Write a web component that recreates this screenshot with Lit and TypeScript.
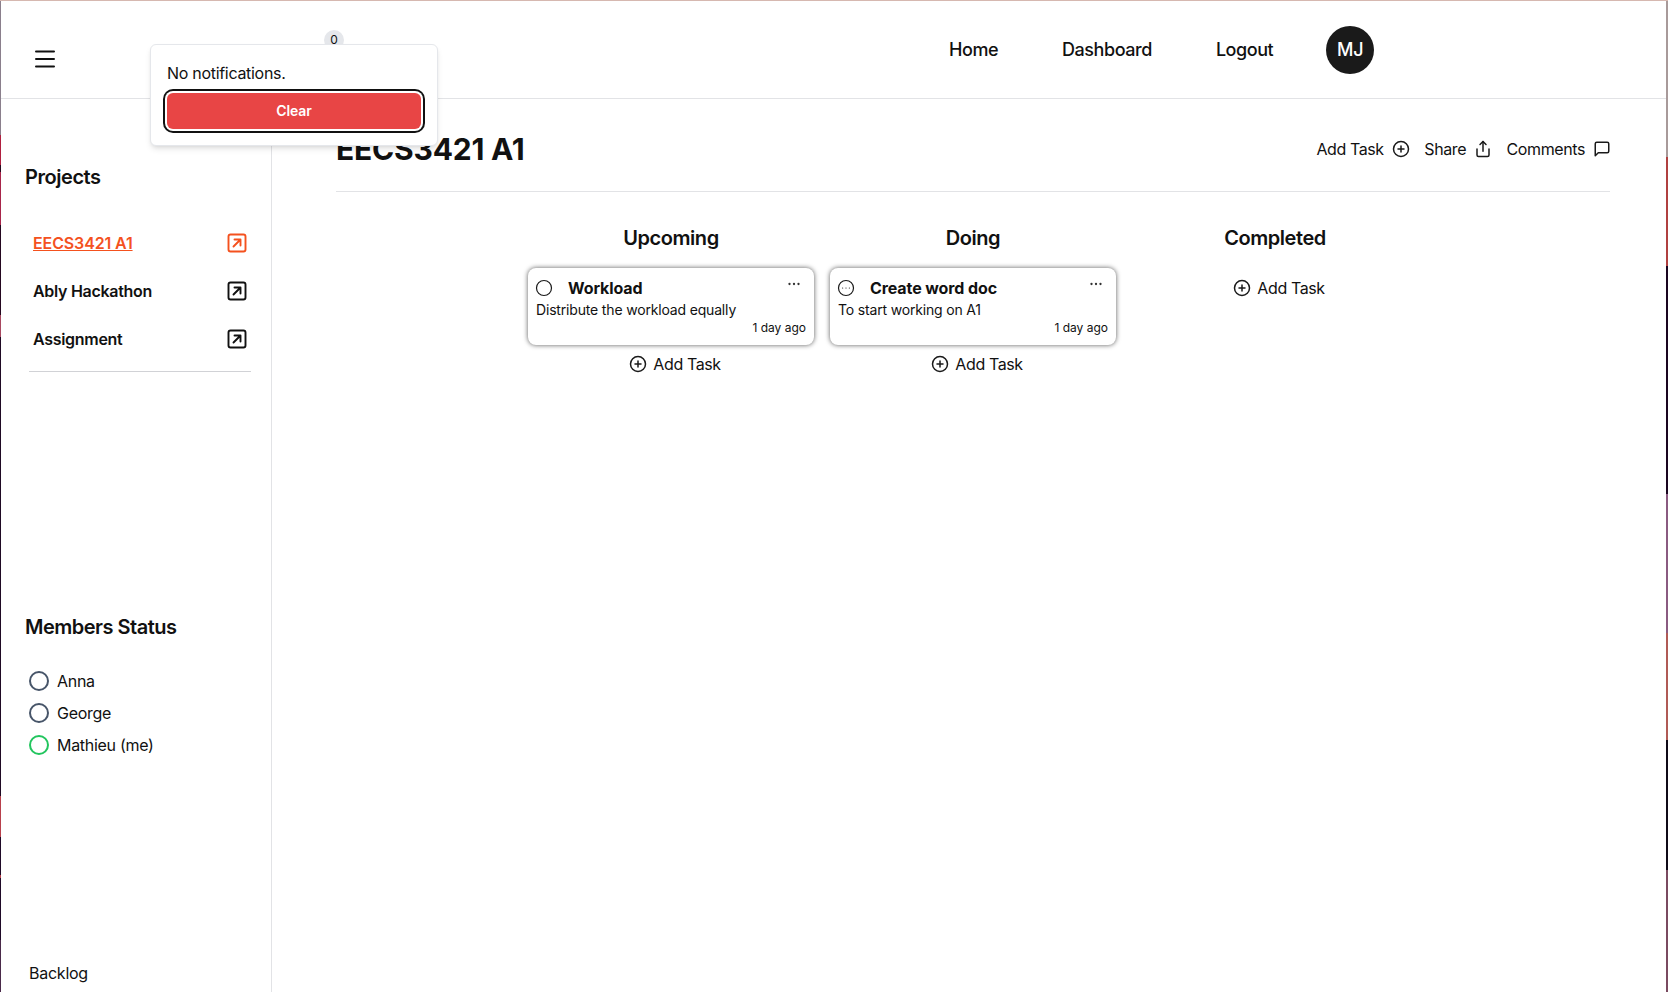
import { LitElement, html, css, svg } from "lit";
import { customElement } from "lit/decorators.js";

const plusCircle = html`<svg class="ic" viewBox="0 0 24 24"><circle cx="12" cy="12" r="10"></circle><path d="M12 8v8M8 12h8"></path></svg>`;
const share = html`<svg class="ic" viewBox="0 0 24 24"><path d="M4 12v8a2 2 0 0 0 2 2h12a2 2 0 0 0 2-2v-8"></path><path d="M16 6l-4-4-4 4"></path><path d="M12 2v13"></path></svg>`;
const comment = html`<svg class="ic" viewBox="0 0 24 24"><path d="M21 15a2 2 0 0 1-2 2H7l-4 4V5a2 2 0 0 1 2-2h14a2 2 0 0 1 2 2z"></path></svg>`;
const external = html`<svg class="ext" viewBox="0 0 24 24"><rect x="3.5" y="3.5" width="17" height="17" rx="2"></rect><path d="M8.5 15.5l7-7M9.5 8.5h6v6"></path></svg>`;
const dots = html`<svg class="dots" viewBox="0 0 16 16"><circle cx="3.5" cy="8" r="1.15"></circle><circle cx="8" cy="8" r="1.15"></circle><circle cx="12.5" cy="8" r="1.15"></circle></svg>`;
const todo = html`<svg class="ic" viewBox="0 0 24 24"><circle cx="12" cy="12" r="10"></circle></svg>`;
const doing = html`<svg class="ic" viewBox="0 0 24 24"><circle cx="12" cy="12" r="10"></circle>${svg`<path d="M7.5 12h.01M12 12h.01M16.5 12h.01"></path>`}</svg>`;

const addTask = (cls: string) => html`<div class="add ${cls}">${plusCircle}<span>Add Task</span></div>`;

const card = (icon: unknown, title: string, desc: string) => html`
  <div class="card">
    <div class="card-head">${icon}<span class="card-title">${title}</span>${dots}</div>
    <div class="card-desc">${desc}</div>
    <div class="card-time">1 day ago</div>
  </div>`;

@customElement("app-root")
export class AppRoot extends LitElement {
  static styles = css`
    :host {
      display: block;
      box-sizing: border-box;
      height: 992px;
      padding: 1px 2px 0 1px;
      overflow: hidden;
      color: #111;
      font-family: Inter, "Liberation Sans", sans-serif;
      letter-spacing: -0.25px;
      background:
        linear-gradient(#d6b8b0, #d6b8b0) top / 100% 1px no-repeat,
        linear-gradient(#8a7f8c 0 135px, #b01f3f 135px 165px, #2a0a20 165px 172px, #a8254a 172px 225px, #240820 225px 315px, #a84860 315px 337px, #1f0a24 337px 796px, #b8404c 796px 837px, #1f0a28 837px 875px, #b8404c 875px 878px, #1f0a28 878px 940px, #4a2a4a 940px) left / 1px 100% no-repeat,
        linear-gradient(#a89a9a 0 157px, #b04040 157px 266px, #1a0520 266px 494px, #8a5a80 494px 633px, #b05a55 633px 740px, #100a18 740px 870px, #7a4a60 870px) right / 2px 100% no-repeat,
        #fff;
    }
    .frame { background: #fff; height: 100%; display: flex; flex-direction: column; }

    .ic { width: 18px; height: 18px; flex: none; fill: none; stroke: #1a1a1a; stroke-width: 2; stroke-linecap: round; stroke-linejoin: round; }
    .ext { width: 24px; height: 24px; flex: none; fill: none; stroke: currentColor; stroke-width: 1.9; stroke-linecap: round; stroke-linejoin: round; }
    .dots { width: 16px; height: 16px; flex: none; fill: #333; margin-left: auto; margin-right: 4px; }

    header { position: relative; height: 97px; flex: none; border-bottom: 1px solid #e2e3e6; display: flex; align-items: flex-start; }
    .menu { width: 24px; height: 24px; margin: 46px 0 0 32px; fill: none; stroke: #111; stroke-width: 2; stroke-linecap: round; }
    nav { display: flex; align-items: center; gap: 64px; margin: 25px 0 0 892px; font-size: 18px; font-weight: 500; line-height: 48px; letter-spacing: -0.45px; }
    .avatar { width: 48px; height: 48px; border-radius: 50%; background: #1a1a1a; color: #fff; font-size: 18px; font-weight: 500; display: flex; align-items: center; justify-content: center; margin-left: -11px; letter-spacing: -0.2px; }

    .badge { position: absolute; left: 323px; top: 29px; width: 20px; height: 20px; border-radius: 50%; background: #e5e7eb; font-size: 12px; line-height: 20px; text-align: center; }
    .pop { position: absolute; left: 149px; top: 43px; z-index: 5; box-sizing: border-box; width: 288px; height: 102px; padding: 16px 14px 0 16px; background: #fff; border: 1px solid #e5e7eb; border-radius: 6px; box-shadow: 0 4px 6px -1px rgba(0,0,0,.1), 0 2px 4px -2px rgba(0,0,0,.1); font-size: 16px; line-height: 24px; letter-spacing: -0.3px; }
    .clear { display: block; box-sizing: border-box; width: 254px; height: 36px; margin: 8px 0 0 0; padding: 0; border: 0; border-radius: 6px; background: #e84545; color: #fff; font: 600 14px/36px Inter, "Liberation Sans", sans-serif; letter-spacing: -0.1px; box-shadow: 0 0 0 2px #fff, 0 0 0 4px #111; }

    .body { flex: 1; min-height: 0; display: flex; }
    aside { box-sizing: border-box; width: 271px; flex: none; border-right: 1px solid #e2e3e6; display: flex; flex-direction: column; padding: 64px 0 7px 24px; }
    h2 { margin: 0; font-size: 20px; line-height: 28px; font-weight: 600; letter-spacing: -0.45px; }
    .projects { margin-top: 28px; width: 224px; }
    .project { display: flex; align-items: center; justify-content: space-between; height: 48px; padding-left: 8px; font-weight: 600; font-size: 16px; letter-spacing: -0.3px; }
    .project.active { color: #f4511e; letter-spacing: -0.12px; }
    .project.active span { text-decoration: underline; }
    .rule { width: 222px; height: 1px; background: #d1d2d6; margin: 8px 0 0 4px; }
    .members-title { margin-top: 241px; letter-spacing: -0.5px; }
    .members { margin-top: 24px; }
    .member { display: flex; align-items: center; gap: 8px; height: 32px; padding-left: 4px; font-size: 16px; letter-spacing: -0.3px; }
    .ring { box-sizing: border-box; width: 20px; height: 20px; border-radius: 50%; border: 2px solid #475569; }
    .ring.on { border-color: #22c55e; }
    .backlog { margin-top: auto; padding-left: 4px; font-size: 16px; line-height: 24px; }

    main { flex: 1; min-width: 0; padding: 32px 56px 0 64px; }
    .top { display: flex; align-items: flex-start; justify-content: space-between; height: 60px; border-bottom: 1px solid #e2e3e6; }
    h1 { margin: 0; font-size: 30px; line-height: 36px; font-weight: 700; letter-spacing: -0.2px; }
    .actions { display: flex; align-items: center; gap: 14.5px; height: 36px; margin-right: -1px; font-size: 16px; letter-spacing: -0.4px; }
    .action { display: flex; align-items: center; gap: 8px; }
    .board { display: flex; justify-content: center; gap: 16px; margin-top: 32px; }
    .col { width: 286px; display: flex; flex-direction: column; align-items: center; }
    .col h2 { margin-bottom: 16px; }
    .card { box-sizing: border-box; width: 286px; height: 77px; padding: 8px; border-radius: 8px; background: #fff; box-shadow: 0 0 5px rgba(0,0,0,.65); }
    .card-head { display: flex; align-items: flex-start; line-height: 24px; height: 24px; }
    .card-head .ic { margin: 3px 15px 0 -1px; stroke-width: 1.6; }
    .card-title { font-size: 16px; font-weight: 700; letter-spacing: -0.1px; }
    .card-desc { font-size: 14px; line-height: 20px; letter-spacing: -0.17px; }
    .card-time { font-size: 12px; line-height: 16px; text-align: right; letter-spacing: 0; }
    .add { display: flex; align-items: center; justify-content: center; gap: 6px; font-size: 16px; line-height: 24px; letter-spacing: -0.4px; }
    .add.below { margin-top: 7px; padding-left: 8px; }
    .add.solo { margin-top: 8px; padding-left: 8px; }
  `;

  render() {
    return html`
      <div class="frame">
        <header>
          <svg class="menu" viewBox="0 0 24 24"><path d="M3 4.5h18M3 12h18M3 19.5h18"></path></svg>
          <nav>
            <span>Home</span><span>Dashboard</span><span>Logout</span>
            <div class="avatar">MJ</div>
          </nav>
          <div class="badge">0</div>
          <div class="pop">
            <div>No notifications.</div>
            <button class="clear">Clear</button>
          </div>
        </header>
        <div class="body">
          <aside>
            <h2>Projects</h2>
            <div class="projects">
              <div class="project active"><span>EECS3421 A1</span>${external}</div>
              <div class="project"><span>Ably Hackathon</span>${external}</div>
              <div class="project"><span>Assignment</span>${external}</div>
            </div>
            <div class="rule"></div>
            <h2 class="members-title">Members Status</h2>
            <div class="members">
              <div class="member"><div class="ring"></div><span>Anna</span></div>
              <div class="member"><div class="ring"></div><span>George</span></div>
              <div class="member"><div class="ring on"></div><span>Mathieu (me)</span></div>
            </div>
            <div class="backlog">Backlog</div>
          </aside>
          <main>
            <div class="top">
              <h1>EECS3421 A1</h1>
              <div class="actions">
                <div class="action"><span>Add Task</span>${plusCircle}</div>
                <div class="action"><span>Share</span>${share}</div>
                <div class="action"><span>Comments</span>${comment}</div>
              </div>
            </div>
            <div class="board">
              <div class="col">
                <h2>Upcoming</h2>
                ${card(todo, "Workload", "Distribute the workload equally")}
                ${addTask("below")}
              </div>
              <div class="col">
                <h2>Doing</h2>
                ${card(doing, "Create word doc", "To start working on A1")}
                ${addTask("below")}
              </div>
              <div class="col">
                <h2>Completed</h2>
                ${addTask("solo")}
              </div>
            </div>
          </main>
        </div>
      </div>
    `;
  }
}
